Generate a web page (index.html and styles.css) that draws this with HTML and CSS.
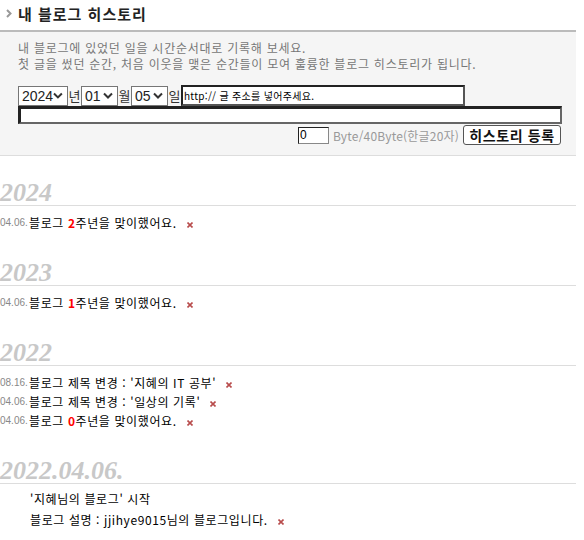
FILE: index.html
```html
<!DOCTYPE html>
<html lang="ko">
<head>
<meta charset="utf-8">
<title>내 블로그 히스토리</title>
<link rel="stylesheet" href="styles.css">
</head>
<body>
<div class="wrap">
  <h2 class="title">
    <svg class="arrow" width="6" height="9" viewBox="0 0 6 9"><path d="M1 1 L4.5 4.5 L1 8" fill="none" stroke="#999" stroke-width="2"/></svg>
    <span>내 블로그 히스토리</span>
  </h2>
  <div class="panel">
    <p class="desc">내 블로그에 있었던 일을 시간순서대로 기록해 보세요.<br>첫 글을 썼던 순간, 처음 이웃을 맺은 순간들이 모여 훌륭한 블로그 히스토리가 됩니다.</p>
    <div class="row1">
      <span class="sel w50"><span class="val">2024</span><svg width="10" height="7" viewBox="0 0 10 7"><path d="M1 1.5 L5 5.5 L9 1.5" fill="none" stroke="#333" stroke-width="2"/></svg></span>
      <span class="unit">년</span>
      <span class="sel w37"><span class="val">01</span><svg width="10" height="7" viewBox="0 0 10 7"><path d="M1 1.5 L5 5.5 L9 1.5" fill="none" stroke="#333" stroke-width="2"/></svg></span>
      <span class="unit">월</span>
      <span class="sel w37"><span class="val">05</span><svg width="10" height="7" viewBox="0 0 10 7"><path d="M1 1.5 L5 5.5 L9 1.5" fill="none" stroke="#333" stroke-width="2"/></svg></span>
      <span class="unit">일</span>
      <input class="url" type="text" value="http:// 글 주소를 넣어주세요.">
    </div>
    <input class="memo" type="text">
    <div class="row3">
      <input class="count" type="text" value="0">
      <span class="byte">Byte/40Byte(한글20자)</span>
      <button class="submit" type="button">히스토리 등록</button>
    </div>
  </div>

  <div class="year first">2024</div>
  <ul class="items">
    <li><span class="date">04.06.</span>블로그 <b class="num">2</b>주년을 맞이했어요.<svg class="del" width="6" height="6" viewBox="0 0 6 6"><path d="M0.5 0.5 L5.5 5.5 M5.5 0.5 L0.5 5.5" stroke="#b84c4c" stroke-width="1.6"/></svg></li>
  </ul>

  <div class="year">2023</div>
  <ul class="items">
    <li><span class="date">04.06.</span>블로그 <b class="num">1</b>주년을 맞이했어요.<svg class="del" width="6" height="6" viewBox="0 0 6 6"><path d="M0.5 0.5 L5.5 5.5 M5.5 0.5 L0.5 5.5" stroke="#b84c4c" stroke-width="1.6"/></svg></li>
  </ul>

  <div class="year">2022</div>
  <ul class="items">
    <li><span class="date">08.16.</span>블로그 제목 변경 : '지혜의 IT 공부'<svg class="del" width="6" height="6" viewBox="0 0 6 6"><path d="M0.5 0.5 L5.5 5.5 M5.5 0.5 L0.5 5.5" stroke="#b84c4c" stroke-width="1.6"/></svg></li>
    <li><span class="date">04.06.</span>블로그 제목 변경 : '일상의 기록'<svg class="del" width="6" height="6" viewBox="0 0 6 6"><path d="M0.5 0.5 L5.5 5.5 M5.5 0.5 L0.5 5.5" stroke="#b84c4c" stroke-width="1.6"/></svg></li>
    <li><span class="date">04.06.</span>블로그 <b class="num">0</b>주년을 맞이했어요.<svg class="del" width="6" height="6" viewBox="0 0 6 6"><path d="M0.5 0.5 L5.5 5.5 M5.5 0.5 L0.5 5.5" stroke="#b84c4c" stroke-width="1.6"/></svg></li>
  </ul>

  <div class="year">2022.04.06.</div>
  <ul class="items start">
    <li>'지혜님의 블로그' 시작</li>
    <li>블로그 설명 : jjihye9015님의 블로그입니다.<svg class="del" width="6" height="6" viewBox="0 0 6 6"><path d="M0.5 0.5 L5.5 5.5 M5.5 0.5 L0.5 5.5" stroke="#b84c4c" stroke-width="1.6"/></svg></li>
  </ul>
</div>
</body>
</html>
```
FILE: styles.css
```css
* { box-sizing: border-box; }
body {
  margin: 0;
  background: #fff;
  font-family: "Noto Sans CJK KR", "Liberation Sans", sans-serif;
  font-size: 12px;
  color: #000;
}
.wrap { width: 576px; }

.title {
  margin: 0;
  height: 32px;
  padding: 0 0 4px 6px;
  border-bottom: 2px solid #bbb;
  display: flex;
  align-items: center;
  gap: 6px;
  font-size: 15px;
  letter-spacing: 1px;
  font-weight: bold;
  color: #222;
}
.arrow { display: block; }

.panel {
  height: 124px;
  background: #f5f5f5;
  border-bottom: 1px solid #ddd;
  padding: 8px 14px 0 18px;
}
.desc {
  margin: 0;
  font-size: 12px;
  line-height: 16px;
  letter-spacing: 0.75px;
  color: #777;
}

.row1 {
  margin-top: 13px;
  display: flex;
  align-items: center;
  height: 21px;
}
.sel {
  height: 20px;
  border: 1px solid #767676;
  background: #fff;
  display: flex;
  align-items: center;
  justify-content: space-between;
  padding: 0 4px 0 3px;
  font-family: "Liberation Sans", sans-serif;
  font-size: 14px;
  color: #222;
}
.sel svg { display: block; }
.w50 { width: 50px; }
.w37 { width: 37px; }
.unit {
  width: 13px;
  text-align: center;
  font-size: 13px;
  color: #333;
}
.url {
  width: 284px;
  height: 21px;
  margin: 0;
  padding: 0 0 0 1px;
  border-style: solid;
  border-width: 2px;
  border-color: #222 #555 #555 #222;
  background: #fff;
  font-family: "Noto Sans CJK KR", sans-serif;
  font-size: 10px;
  letter-spacing: 0.3px;
  color: #000;
  outline: none;
}
.memo {
  display: block;
  width: 544px;
  height: 18px;
  margin: 0;
  padding: 0;
  border-style: solid;
  border-width: 3px 2px 2px 3px;
  border-color: #222 #666 #666 #222;
  background: #fff;
}
.row3 {
  display: flex;
  justify-content: flex-end;
  align-items: center;
  height: 22px;
  margin-right: 1px;
}
.count {
  width: 31px;
  height: 17px;
  margin: 0;
  padding: 0 0 0 1px;
  border-style: solid;
  border-width: 1px;
  border-color: #222 #888 #888 #222;
  background: #fff;
  font-family: "Liberation Sans", sans-serif;
  font-size: 12px;
  color: #000;
}
.byte {
  margin-left: 4px;
  font-size: 12px;
  letter-spacing: 0.2px;
  color: #999;
}
.submit {
  margin-left: 4px;
  width: 98px;
  height: 20px;
  padding: 0;
  border: 1px solid #555;
  border-radius: 3px;
  background: #fff;
  font-family: "Noto Sans CJK KR", sans-serif;
  font-size: 14px;
  letter-spacing: 0.6px;
  font-weight: bold;
  color: #111;
  line-height: 16px;
}

.year {
  height: 29px;
  line-height: 32px;
  border-bottom: 1px solid #ddd;
  font-family: "Liberation Serif", serif;
  font-style: italic;
  font-weight: bold;
  font-size: 26px;
  color: #c8c8c8;
  overflow: hidden;
}
.year.first { margin-top: 21px; }

.items {
  list-style: none;
  margin: 0;
  padding: 7px 0 25px 0;
}
.items li {
  line-height: 19px;
  font-size: 12px;
  letter-spacing: 0.6px;
  white-space: nowrap;
}
.date {
  display: inline-block;
  width: 29px;
  font-family: "Liberation Sans", sans-serif;
  font-size: 10px;
  letter-spacing: 0;
  color: #888;
  vertical-align: 2px;
}
.num { color: #f00; font-weight: bold; }
.del {
  margin-left: 10px;
  vertical-align: middle;
}
.items.start {
  padding: 4px 0 0 30px;
}
.items.start li { line-height: 21px; }
```
